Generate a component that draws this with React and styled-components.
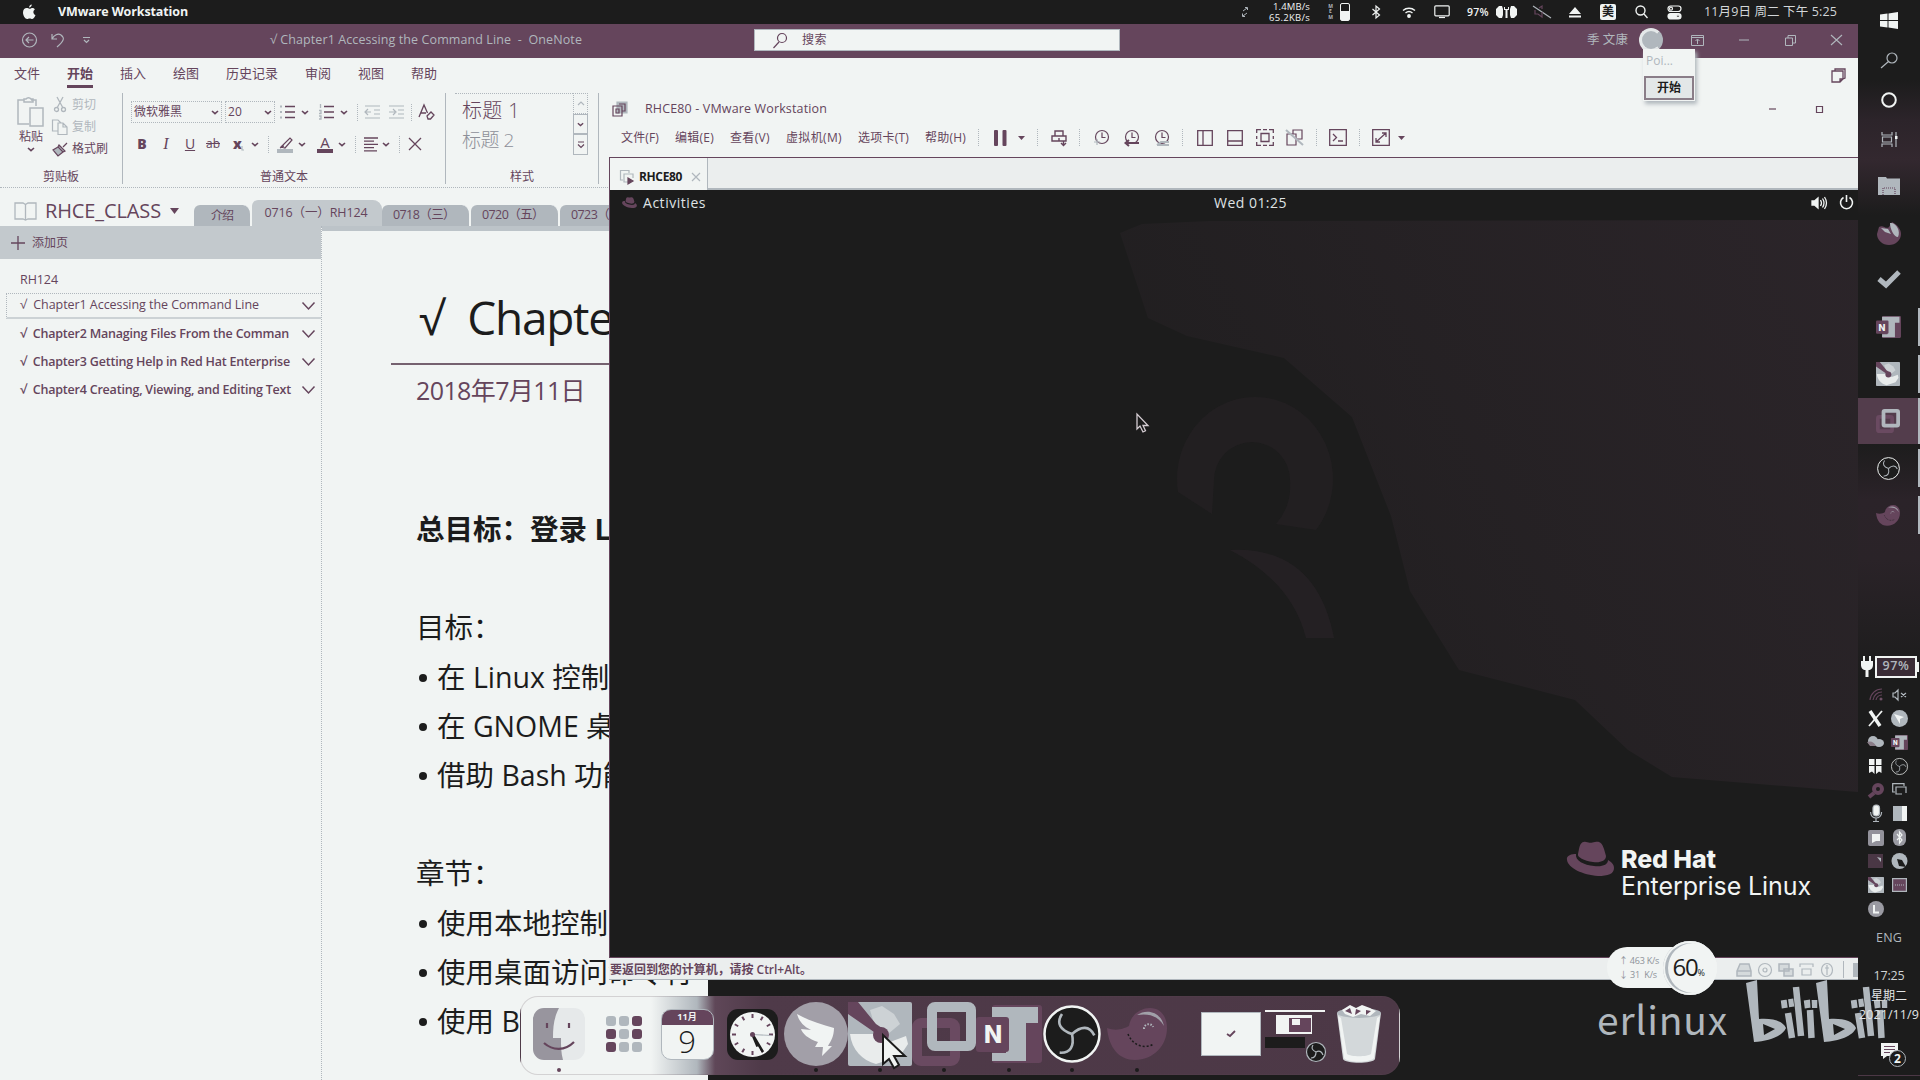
import React, { useLayoutEffect, useRef } from "react";
import styled, { createGlobalStyle, css } from "styled-components";

const C = { ink: "#1c1c1c", plum: "#65455c", grey: "#b0b7bd", paper: "#f1f4f3", band: "#c3c9cd", strip: "#ebeeee" };

const Global = createGlobalStyle`
  * { box-sizing: border-box; }
  body { margin: 0; background: ${C.ink}; overflow: hidden; }
  svg { display: block; flex: none; overflow: visible; }
`;

const Screen = styled.div`
  position: relative; width: 1920px; height: 1080px; overflow: hidden; background: ${C.ink};
  font-family: "Open Sans", "Noto Sans CJK SC", sans-serif; font-size: 12px; color: ${C.plum};
`;

/* A label whose tracking is adjusted to fill a given width. */
const LabelBox = styled.span`
  display: block; flex: none; white-space: pre; line-height: 1;
  width: ${(p) => p.$w}px; margin-left: ${(p) => p.$ml || 0}px;
  font-size: ${(p) => p.$s || 12}px; font-weight: ${(p) => p.$b || 400};
  color: ${(p) => p.$c || "inherit"};
`;
function Label({ w, ml, s, b, c, children, className }) {
  const ref = useRef(null);
  useLayoutEffect(() => {
    const el = ref.current;
    el.style.letterSpacing = "0px";
    const n = Math.max(1, el.textContent.length);
    el.style.letterSpacing = (w - el.getBoundingClientRect().width) / n + "px";
  });
  return (
    <LabelBox className={className} $w={w} $ml={ml} $s={s} $b={b} $c={c}><span ref={ref}>{children}</span></LabelBox>
  );
}

const Glyph = styled.svg`margin-left: ${(p) => p.$ml || 0}px;`;
function Icon({ w = 16, h = 16, ml, box, c = C.plum, sw = 1.2, fill = "none", children }) {
  return (
    <Glyph width={w} height={h} $ml={ml} viewBox={box || `0 0 ${w} ${h}`} fill={fill} stroke={c} strokeWidth={sw}>{children}</Glyph>
  );
}
const Chevron = ({ ml, c = C.plum, w = 8 }) => (
  <Icon w={w} h={5} ml={ml} c={c} box="0 0 8 5" sw={1.6}><path d="M1 1l3 2.6L7 1" /></Icon>
);
const Divider = styled.i`
  flex: none; width: 0; height: ${(p) => (p.$h === undefined ? 17 : p.$h)}px; margin-left: ${(p) => p.$ml}px;
  border-left: 1px ${(p) => (p.$solid ? "solid" : "dotted")} ${C.grey};
`;

/* ---------- top menu bar ---------- */
const MenuBar = styled.header`
  display: flex; align-items: center; width: 1858px; height: 24px; padding-left: 22px; background: ${C.ink}; color: ${C.paper};
`;
const Push = styled.div`flex: 1;`;
const NetSpeed = styled.div`display: flex; flex-direction: column; align-items: flex-end; gap: 1px; width: 46px; margin-left: 16px;`;
const MemText = styled.span`margin-left: 17px; width: 7px; font: 700 5px/5.5px "Open Sans", sans-serif; color: ${C.grey}; display: flex; flex-direction: column; align-items: center;`;
const MemBar = styled.span`margin-left: 6px; width: 10px; height: 18px; border: 1px solid ${C.paper}; border-radius: 2px; background: linear-gradient(${C.ink} 45%, ${C.paper} 45%);`;
const ImeBadge = styled.span`
  display: flex; align-items: center; justify-content: center; width: 16px; height: 16px; margin-left: 19px; border-radius: 2px;
  background: ${C.paper}; color: ${C.ink}; font-size: 12px; line-height: 1; font-weight: 700;
`;

function TopMenu() {
  return (
    <MenuBar>
      <Icon w={14} h={16} c="none" fill={C.paper}>
        <path d="M9.8.6c.1 1.500-1.200 3-2.700 3C7 2.200 8.300.800 9.800.600zM12.800 5.500c-2.200 1.500-1.700 4.600.700 5.600-.5 1.700-1.800 3.900-3.200 3.900-1 0-1.400-.6-2.600-.6s-1.700.6-2.600.6C3.200 15 1 11.600 1 8.500c0-3 1.900-4.400 3.600-4.400 1.200 0 2.100.7 2.900.7s1.800-.8 3.200-.8c.8 0 1.600.5 2.100 1.500z" />
      </Icon>
      <Label w={130} ml={22} s={12.500} b={700}>VMware Workstation</Label>
      <Push />
      <Icon w={6} h={12} c={C.grey} sw={1}><path d="M1 5l4-3M3 1.500h2.500V4M5 7L1 10M.5 7.500V10.500H3" /></Icon>
      <NetSpeed><Label w={37} s={9.500}>1.4MB/s</Label><Label w={41} s={9.500}>65.2KB/s</Label></NetSpeed>
      <MemText><span>M</span><span>E</span><span>M</span></MemText>
      <MemBar />
      <Icon w={10} h={14} ml={21} c={C.paper} sw={1.200}><path d="M1.500 4l7 6L5 13V1l3.500 3-7 6" /></Icon>
      <Icon w={14} h={12} ml={21} c={C.paper} sw={1.400}><path d="M1 4.500a9 9 0 0 1 12 0M3.500 7a5.500 5.500 0 0 1 7 0" /><circle cx="7" cy="10" r="1.200" fill={C.paper} /></Icon>
      <Icon w={16} h={14} ml={18} c={C.paper} sw={1.200}><rect x=".8" y=".8" width="14.400" height="10" rx="1" /><path d="M5 12.500h6" /></Icon>
      <Label w={22} ml={17} s={10.500} b={600}>97%</Label>
      <Icon w={23} h={14} ml={6} c="none" fill={C.paper}>
        <path d="M4 1h3l1 3v6l-1 3H4L1 10V4zM19 1h-3l-1 3v6l1 3h3l3-3V4z" /><path d="M9 2v3h1.500v8h2V5H14V2h-1v2h-3V2z" />
      </Icon>
      <Icon w={20} h={14} ml={14} c={C.grey}><path d="M1 1l18 12" /><path d="M3 5v4h3l4 3V7M7 3l3-2v3" stroke={C.plum} /></Icon>
      <Icon w={12} h={11} ml={17} c="none" fill={C.paper}><path d="M6 0l6 7H0zM0 8.500h12v2H0z" /></Icon>
      <ImeBadge>美</ImeBadge>
      <Icon w={13} h={14} ml={19} c={C.paper} sw={1.400}><circle cx="5.500" cy="5.500" r="4.500" /><path d="M9 9l3.500 4" /></Icon>
      <Icon w={15} h={15} ml={19} c={C.paper} sw={1.200}><rect x="1" y="1" width="13" height="5.500" rx="2.700" /><circle cx="4" cy="3.700" r="1.500" /><rect x="1" y="8.500" width="13" height="5.500" rx="2.700" fill={C.paper} /><circle cx="11" cy="11.200" r="1.400" fill={C.ink} /></Icon>
      <Label w={133} ml={22} s={12.500} c="#d2d6d8">11月9日 周二 下午 5:25</Label>
      <Divider $ml={20} $h={0} />
    </MenuBar>
  );
}

/* ---------- OneNote ---------- */
const OneNote = styled.section`width: 1858px; height: 1056px; display: flex; flex-direction: column; background: ${C.paper};`;
const TitleBar = styled.div`display: flex; align-items: center; height: 34px; flex: none; padding: 0 0 2px 22px; background: ${C.plum}; color: ${C.grey};`;
const SearchBox = styled.div`
  display: flex; align-items: center; width: 366px; height: 22px; margin-left: 172px; margin-top: 0; padding-left: 18px;
  background: ${C.paper}; border: 1px solid ${C.grey}; color: ${C.plum};
`;
const Avatar = styled.span`width: 24px; height: 24px; margin-left: 11px; border-radius: 50%; background: ${C.grey}; border: 3px solid #e4e8e9; border-right-color: ${C.grey};`;

const RibbonTabs = styled.nav`display: flex; align-items: center; gap: 27px; height: 34px; flex: none; padding: 0 12px 0 14px;`;
const RibbonTab = styled.div`
  height: 30px; padding-top: 9px; margin-top: -5px;
  border-bottom: 3px solid ${(p) => (p.$on ? C.plum : "transparent")};
`;
const Ribbon = styled.div`display: flex; height: 96px; flex: none; border-bottom: 1px dotted ${C.grey};`;
const Group = styled.div`
  display: flex; flex-direction: column; width: ${(p) => p.$w}px; height: 91px; margin-top: 1px; flex: none;
  border-right: 1px solid ${C.grey};
`;
const GroupName = styled.div`display: flex; justify-content: center; margin-top: auto; height: 13px;`;
const ToolRow = styled.div`display: flex; align-items: center; height: ${(p) => p.$h}px;`;
const Clip = styled.div`display: flex; height: 68px;`;
const PasteCol = styled.div`display: flex; flex-direction: column; align-items: center; width: 28px; margin-left: 17px; padding-top: 3px; gap: 4px;`;
const ClipCol = styled.div`display: flex; flex-direction: column; margin-left: 7px;`;
const Combo = styled.div`
  display: flex; align-items: center; justify-content: space-between; height: 22px; width: ${(p) => p.$w}px; margin-left: ${(p) => p.$ml}px;
  padding: 0 2px; border: 1px dotted ${C.grey};
`;
const Mark = styled.span`
  flex: none; width: ${(p) => p.$w}px; margin-left: ${(p) => p.$ml}px; text-align: center; font-size: 14px; line-height: 16px;
  ${(p) => p.$kind === "B" && css`font-weight: 800;`}
  ${(p) => p.$kind === "I" && css`font-style: italic; font-family: "Liberation Serif", serif; font-size: 16px;`}
  ${(p) => p.$kind === "U" && css`text-decoration: underline;`}
  ${(p) => p.$kind === "S" && css`text-decoration: line-through; font-size: 12px;`}
  ${(p) => p.$kind === "bar" && css`border-bottom: 4px solid ${C.plum}; line-height: 14px; font-size: 15px;`}
`;
const StyleBody = styled.div`display: flex; height: 65px; padding-left: 9px;`;
const StyleList = styled.div`display: flex; flex-direction: column; width: 118px; padding: 7px 0 0 7px; gap: 10px; border-top: 1px dotted ${C.grey};`;
const StyleScroll = styled.div`display: flex; flex-direction: column; width: 15px; height: 62px;`;
const ScrollCell = styled.div`
  display: flex; align-items: center; justify-content: center; flex: 1; border: 1px ${(p) => (p.$dim ? "dotted" : "solid")} ${C.grey};
`;

const NotebookRow = styled.div`display: flex; align-items: flex-end; height: 38px; flex: none; padding-left: 14px;`;
const NotebookName = styled.div`display: flex; align-items: center; height: 30px; width: 180px;`;
const SectionTab = styled.div`
  display: flex; align-items: center; justify-content: ${(p) => (p.$on ? "center" : "flex-start")}; flex: none;
  width: ${(p) => p.$w}px; height: ${(p) => (p.$on ? 26 : 21)}px; padding-left: ${(p) => p.$pl || 0}px;
  border-radius: 6px 9px 0 0; background: ${(p) => (p.$on ? C.band : C.grey)};
  border-right: 2px solid ${(p) => (p.$on ? C.band : C.paper)};
`;
const Body = styled.div`display: flex; flex: 1; min-height: 0;`;
const Sidebar = styled.aside`width: 322px; border-right: 1px dotted ${C.grey};`;
const AddPage = styled.div`display: flex; align-items: center; height: 33px; padding-left: 11px; background: ${C.band};`;
const SectionTitle = styled.div`display: flex; align-items: center; height: 34px; padding: 9px 0 0 20px;`;
const PageItem = styled.div`
  display: flex; align-items: center; justify-content: space-between; height: 28px; padding: 0 6px 0 20px;
  ${(p) => p.$on && css`height: 26px; margin: 0 0 1px 6px; padding-left: 13px; border: 1px dotted ${C.grey}; border-right: 0; border-bottom: 2px solid #ccd2d5;`}
`;
const Page = styled.main`flex: 1; overflow: hidden; border-top: 5px solid #bcc3c8; color: ${C.ink};`;
const PageTitle = styled.div`display: flex; align-items: center; gap: 23px; height: 66px; margin: 53px 0 0 97px; font-size: 46px; font-family: "Open Sans", sans-serif;`;
const Rule = styled.div`height: 2px; width: 400px; margin: 13px 0 0 69px; background: #75616f;`;
const PageDate = styled.div`height: 30px; margin: 10px 0 100px 94px; display: flex; align-items: center; color: ${C.plum};`;
const Line = styled.div`
  height: 49.200px; line-height: 49.200px; padding-left: 94px; white-space: pre; font-size: 28.500px; font-weight: ${(p) => (p.$b ? 700 : 400)};
  display: flex; align-items: center;
`;
const Dot = styled.i`width: 8px; height: 8px; border-radius: 50%; background: ${C.ink}; margin: 1px 10px 0 3px;`;

const tabs = [["文件", 26], ["开始", 26], ["插入", 26], ["绘图", 26], ["历史记录", 52], ["审阅", 26], ["视图", 26], ["帮助", 26]];
const lines = [
  ["总目标：登录 Linux", 0, 1], [""], ["目标："], ["在 Linux 控制台", 1], ["在 GNOME 桌面", 1], ["借助 Bash 功能", 1], [""],
  ["章节："], ["使用本地控制台", 1], ["使用桌面访问命令行", 1], ["使用 B", 1],
];
const pages = [
  ["√  Chapter1 Accessing the Command Line", 239], ["√  Chapter2 Managing Files From the Comman", 269],
  ["√  Chapter3 Getting Help in Red Hat Enterprise", 270], ["√  Chapter4 Creating, Viewing, and Editing Text", 271],
];

function ListGlyph({ ml, numbered }) {
  return (
    <Icon w={15} h={16} ml={ml} sw={1.300}>
      <path d="M5 2.500h10M5 8h10M5 13.500h10" />
      {numbered ? <path d="M1.500 0v4M0 6.500h2v3H0M0 12h2v3H0" stroke={C.grey} /> : <path d="M0 2.500h2M0 8h2M0 13.500h2" strokeWidth="2" stroke={C.grey} />}
    </Icon>
  );
}
function IndentGlyph({ ml, flip }) {
  return (
    <Icon w={15} h={14} ml={ml} c={C.grey} sw={1.200}>
      <path d={`M0 1h15M9 5h6M9 9h6M0 13h15M0 7h6M${flip ? "4 4l3 3-3 3" : "3 4L0 7l3 3"}`} />
    </Icon>
  );
}

function OneNoteWindow() {
  return (
    <OneNote>
      <TitleBar>
        <Icon w={15} h={16} c={C.grey}><circle cx="7.500" cy="8" r="7" /><path d="M11.500 8H4M7 5L4 8l3 3" /></Icon>
        <Icon w={14} h={16} ml={14} c={C.grey}><path d="M1 2v5h5M1 7c2-4 6-6 9-4 4 3 3 6-4 12" /></Icon>
        <Icon w={7} h={6} ml={18} c={C.grey}><path d="M0 .5h7M1 3l2.500 2.500L6 3" /></Icon>
        <Label w={312} ml={180} s={12.500}>{"√ Chapter1 Accessing the Command Line  -  OneNote"}</Label>
        <SearchBox>
          <Icon w={14} h={15}><circle cx="9" cy="5" r="4.500" /><path d="M6 9l-5.500 6" /></Icon>
          <Label w={25} ml={15} s={12}>搜索</Label>
        </SearchBox>
        <Label w={41} ml={467} s={12.500}>季 文康</Label>
        <Avatar />
        <Icon w={13} h={11} ml={28} c={C.grey} sw={1}><path d="M.5.500h12v10H.5zM.5 2.500h12M6.500 9V4.500M4.500 6l2-2 2 2" /></Icon>
        <Icon w={10} h={2} ml={35} c={C.grey} sw={1}><path d="M0 1h10" /></Icon>
        <Icon w={11} h={11} ml={36} c={C.grey} sw={1}><path d="M.5 3h7v7.500h-7zM3 3V.500h7.500V8H8" /></Icon>
        <Icon w={11} h={10} ml={35} c={C.grey} sw={1.100}><path d="M0 0l11 10M11 0L0 10" /></Icon>
      </TitleBar>
      <RibbonTabs>
        {tabs.map(([t, w], i) => <RibbonTab key={t} $on={i === 1}><Label w={w} s={13} b={i === 1 ? 700 : 400}>{t}</Label></RibbonTab>)}
        <Push />
        <Icon w={15} h={15} sw={1.300}><path d="M4 3V1h10v9l-2 1M1 3h11v8l-3 3H1zM9 14v-3h3" /></Icon>
      </RibbonTabs>
      <Ribbon>
        <Group $w={123}>
          <Clip>
            <PasteCol>
              <Icon w={28} h={31} c={C.grey} sw={1.500}><path d="M7 4H1v24h11M19 10V4h-5M7 6h9V3h-2a3 3 0 0 0-5 0H7zM13 12h13v18H13z" /></Icon>
              <Label w={24} s={12} c={C.plum}>粘贴</Label>
              <Chevron />
            </PasteCol>
            <ClipCol>
              <ToolRow $h={23}><Icon w={16} h={15} c={C.grey} sw={1.300}><path d="M5 0l6 11M11 0L5 11" /><circle cx="4.500" cy="12.500" r="2" /><circle cx="11.500" cy="12.500" r="2" /></Icon><Label w={24} ml={4} s={12} c={C.grey}>剪切</Label></ToolRow>
              <ToolRow $h={22}><Icon w={16} h={16} c={C.grey} sw={1.200}><path d="M6 12H.5V1H6l3 3M6 4h5l4 4v7.500H6zM11 4v4h4" /></Icon><Label w={24} ml={4} s={12} c={C.grey}>复制</Label></ToolRow>
              <ToolRow $h={22}><Icon w={16} h={15} sw={1.200}><path d="M15 1l-4 4M7 3l6 6-2 1-5-5zM6 5L1 8l5 6 5-4" fill={C.grey} /></Icon><Label w={36} ml={4} s={12}>格式刷</Label></ToolRow>
            </ClipCol>
          </Clip>
          <GroupName><Label w={36} s={12}>剪贴板</Label></GroupName>
        </Group>
        <Group $w={323}>
          <ToolRow $h={38}>
            <Combo $w={91} $ml={8}><Label w={48} s={12}>微软雅黑</Label><Chevron /></Combo>
            <Combo $w={50} $ml={3}><Label w={14} s={12}>20</Label><Chevron /></Combo>
            <ListGlyph ml={5} /><Chevron ml={6} />
            <ListGlyph ml={10} numbered /><Chevron ml={6} />
            <Divider $ml={9} />
            <IndentGlyph ml={7} /><IndentGlyph ml={9} flip />
            <Divider $ml={7} />
            <Icon w={16} h={16} ml={7} sw={1.300}><path d="M0 13L5 1l3.500 8M2 9h5M8 12l4-4 3 3-3.500 4H9z" /></Icon>
          </ToolRow>
          <ToolRow $h={26}>
            <Mark $w={10} $ml={14} $kind="B">B</Mark>
            <Mark $w={10} $ml={14} $kind="I">I</Mark>
            <Mark $w={12} $ml={13} $kind="U">U</Mark>
            <Mark $w={16} $ml={9} $kind="S">ab</Mark>
            <Mark $w={8} $ml={12} $kind="B">x</Mark>
            <Icon w={3} h={6} ml={0} c={C.grey}><path d="M1 5v4h2" /></Icon>
            <Chevron ml={7} />
            <Divider $ml={9} />
            <Icon w={18} h={17} ml={8}><path d="M4 11l9-9 2 2-7 8zM3 12l4-2" /><path d="M0 15h16" stroke={C.grey} strokeWidth="4" /></Icon>
            <Chevron ml={3} />
            <Mark $w={16} $ml={11} $kind="bar">A</Mark>
            <Chevron ml={5} />
            <Divider $ml={9} />
            <Icon w={14} h={15} ml={8} sw={1.300}><path d="M0 1h14M0 4.200h10M0 7.400h14M0 10.600h10M0 13.800h13" /></Icon>
            <Chevron ml={4} />
            <Divider $ml={9} />
            <Icon w={12} h={12} ml={9} sw={1.300}><path d="M0 0l12 12M12 0L0 12" /></Icon>
          </ToolRow>
          <GroupName><Label w={48} s={12}>普通文本</Label></GroupName>
        </Group>
        <Group $w={153}>
          <StyleBody>
            <StyleList><Label w={58} s={20} b={300}>标题 1</Label><Label w={52} s={19} b={300} c="#8d8f98">标题 2</Label></StyleList>
            <StyleScroll>
              <ScrollCell $dim><Icon w={6} h={3} c={C.grey}><path d="M0 3l3-3 3 3" /></Icon></ScrollCell>
              <ScrollCell><Chevron w={7} /></ScrollCell>
              <ScrollCell><Icon w={6} h={7}><path d="M0 1h6M0 3.500L3 6.500l3-3" /></Icon></ScrollCell>
            </StyleScroll>
          </StyleBody>
          <GroupName><Label w={24} s={12}>样式</Label></GroupName>
        </Group>
      </Ribbon>
      <NotebookRow>
        <NotebookName>
          <Icon w={23} h={18} c={C.grey} sw={1.300}><path d="M1 1h8l2.500 1.500L14 1h8v16h-8l-2.500 1L9 17H1zM11.500 2v16" /></Icon>
          <Label w={116} ml={8} s={20}>RHCE_CLASS</Label>
          <Icon w={9} h={6} ml={9} c="none" fill={C.plum}><path d="M0 0h9L4.500 6z" /></Icon>
        </NotebookName>
        <SectionTab $w={58} $pl={17}><Label w={22} s={12}>介绍</Label></SectionTab>
        <SectionTab $w={130} $on><Label w={103} s={12.500}>{"0716（一）RH124"}</Label></SectionTab>
        <SectionTab $w={89} $pl={11}><Label w={62} s={12.500}>{"0718（三）"}</Label></SectionTab>
        <SectionTab $w={89} $pl={11}><Label w={62} s={12.500}>{"0720（五）"}</Label></SectionTab>
        <SectionTab $w={89} $pl={11}><Label w={62} s={12.500}>{"0723（一）"}</Label></SectionTab>
      </NotebookRow>
      <Body>
        <Sidebar>
          <AddPage><Icon w={14} h={14} sw={1.300}><path d="M7 0v14M0 7h14" /></Icon><Label w={36} ml={7} s={12}>添加页</Label></AddPage>
          <SectionTitle><Label w={38} s={12.500}>RH124</Label></SectionTitle>
          {pages.map(([t, w], i) => (
            <PageItem key={t} $on={i === 0}>
              <Label w={w} s={12.500} b={i ? 600 : 400}>{t}</Label>
              <Icon w={13} h={8} sw={1.500}><path d="M.5.500L6.500 7l6-6.500" /></Icon>
            </PageItem>
          ))}
        </Sidebar>
        <Page>
          <PageTitle><span>√</span><Label w={188} s={46}>Chapter1</Label></PageTitle>
          <Rule />
          <PageDate><Label w={169} s={25}>2018年7月11日</Label></PageDate>
          {lines.map(([t, dot, b], i) => <Line key={i} $b={b}>{dot ? <Dot /> : null}{t}</Line>)}
        </Page>
      </Body>
    </OneNote>
  );
}

/* ---------- desktop below the windows ---------- */
const Backdrop = styled.div`position: absolute; left: 708px; top: 980px; width: 1150px; height: 100px; background: ${C.ink};`;

/* ---------- VMware ---------- */
const VmWindow = styled.section`
  position: absolute; left: 609px; top: 96px; width: 1249px; height: 884px; display: flex; flex-direction: column; background: ${C.paper};
`;
const VmTitle = styled.div`display: flex; align-items: center; height: 26px; padding-left: 3px;`;
const VmMenu = styled.div`display: flex; align-items: center; height: 35px; padding: 0 0 4px 12px; margin-top: 0;`;
const VmTabs = styled.div`display: flex; height: 33px; flex: none; background: ${C.strip}; border-top: 1px solid ${C.plum}; border-left: 1px solid ${C.plum};`;
const VmTab = styled.div`display: flex; align-items: center; width: 98px; padding: 6px 0 0 10px; background: ${C.paper}; border-right: 1px solid ${C.grey};`;
const VmTabFill = styled.div`flex: 1; border-bottom: 2px solid ${C.grey};`;
const Guest = styled.div`
  display: flex; flex-direction: column; position: relative; flex: 1; min-height: 0; border-left: 1px solid ${C.plum}; border-bottom: 1px solid ${C.plum}; background: ${C.ink}; color: #dfe2e4;
`;
const GnomeBar = styled.div`display: flex; align-items: center; height: 28px; padding: 0 4px 3px 12px; position: relative;`;
const Wallpaper = styled.svg`position: absolute; left: 0; top: 0;`;
const Pointer = styled.svg`position: absolute; left: ${(p) => p.$x}px; top: ${(p) => p.$y}px;`;
const Brand = styled.div`position: relative; display: flex; align-items: flex-start; margin: auto 47px 58px auto; font-family: Inter, sans-serif; color: ${C.paper};`;
const BrandHat = styled.div`margin-top: -6px;`;
const BrandText = styled.div`display: flex; flex-direction: column; gap: 2px; margin-left: 7px;`;
const StatusBar = styled.div`display: flex; align-items: center; height: 22px; flex: none; padding: 2px 0 0 1px; background: ${C.strip}; border-bottom: 1px solid ${C.grey};`;
const EdgeBlock = styled.i`width: 5px; height: 14px; margin-left: 9px; background: ${C.grey};`;

function Hat({ w, h }) {
  return (
    <Icon w={w} h={h} box="0 0 47 35" c="none" fill={C.plum}>
      <path d="M12 8C13 3 15 0 19 1c4 1 5 1 9 0 5-1 7 1 9 7l2 7c0 5-6 7-13 6-9-1-16-5-15-8z" />
      <path d="M9 13c-4 0-10 1-9 6 1 8 16 15 31 16 10 0 16-2 16-8 0-4-3-6-6-8 0 5-6 7-14 6-10-1-19-5-18-12z" />
    </Icon>
  );
}
const vmMenus = [["文件(F)", 38, 0], ["编辑(E)", 39, 16], ["查看(V)", 40, 16], ["虚拟机(M)", 56, 16], ["选项卡(T)", 51, 16], ["帮助(H)", 41, 16]];

function Clock({ ml, kind }) {
  return (
    <Icon w={15} h={17} ml={ml} sw={1.200}>
      <circle cx="8" cy="8" r="6.500" /><path d="M8 3.500V8.500h3.500" />
      {kind === 0 && <path d="M0 13h6M3 10v6" stroke={C.grey} />}
      {kind === 1 && <path d="M15 14H2M5 11l-3.500 3L5 17" strokeWidth="2" />}
      {kind === 2 && <path d="M3 16l4-3h8M3 16h12" stroke={C.grey} strokeWidth="2" />}
    </Icon>
  );
}

function Vmware() {
  return (
    <VmWindow>
      <VmTitle>
        <Icon w={16} h={17} sw={1.200}><path d="M5 1h10v11H5z" fill={C.grey} stroke={C.grey} /><path d="M1 5h9v10H1zM4 8h3v4H4zM7 3h6v7h-3" /></Icon>
        <Label w={182} ml={17} s={12.500}>RHCE80 - VMware Workstation</Label>
        <Push />
        <Icon w={7} h={2} c={C.plum}><path d="M0 1h7" /></Icon>
        <Icon w={7} h={7} ml={40}><path d="M.5.500h6v6h-6z" /></Icon>
        <Divider $ml={34} $h={0} />
      </VmTitle>
      <VmMenu>
        {vmMenus.map(([t, w, ml]) => <Label key={t} w={w} ml={ml} s={12}>{t}</Label>)}
        <Divider $ml={12} />
        <Icon w={13} h={16} ml={15} c="none" fill={C.plum}><rect width="4" height="16" rx="1" /><rect x="8.500" width="4" height="16" rx="1" /></Icon>
        <Icon w={7} h={4} ml={11} c="none" fill={C.plum}><path d="M0 0h7L3.500 4z" /></Icon>
        <Divider $ml={12} />
        <Icon w={16} h={16} ml={13} sw={1.400}><path d="M4 6V1h8v5M1 6h14v5H1zM8 8v3M12.500 11v5M10 13l2.500 2.500L15 13" /></Icon>
        <Divider $ml={12} />
        <Clock ml={14} kind={0} /><Clock ml={15} kind={1} /><Clock ml={15} kind={2} />
        <Divider $ml={13} />
        <Icon w={16} h={16} ml={14} sw={1.300}><path d="M.7.700h14.600v14.600H.7zM6 1v14" /></Icon>
        <Icon w={16} h={16} ml={14} sw={1.300}><path d="M.7.700h14.600v14.600H.7zM1 11h14" /></Icon>
        <Icon w={18} h={17} ml={13} sw={1.300}><path d="M.7 4V.700H5M7 .7h4M7 16.300h4M.7 7v3M17.300 7v3M13 .7h4.300V4M17.300 13v3.300H13M5 16.300H.7V13" /><path d="M5 4.500h8v8H5z" /></Icon>
        <Icon w={17} h={17} ml={12} sw={1.200}><path d="M1 5h9v11H1zM7 5V1h9v9h-6" /><path d="M0 1l17 15" stroke={C.grey} strokeWidth="2" /></Icon>
        <Divider $ml={13} />
        <Icon w={18} h={17} ml={12} sw={1.300}><path d="M.7.700h16.600v15.600H.7zM4 5l3.500 3.500L4 12M9 12h5" /></Icon>
        <Divider $ml={12} />
        <Icon w={18} h={17} ml={12} sw={1.300}><path d="M.7.700h16.600v15.600H.7zM10 4h4v4M14 4L4 13M4 9v4h4" /></Icon>
        <Icon w={7} h={4} ml={8} c="none" fill={C.plum}><path d="M0 0h7L3.500 4z" /></Icon>
      </VmMenu>
      <VmTabs>
        <VmTab>
          <Icon w={14} h={15}><path d="M9 12H4V4h9v4M3 10H.5V.500H9V3" stroke={C.grey} /><path d="M8 8l5 3-5 3z" fill={C.plum} /></Icon>
          <Label w={43} ml={5} s={12} b={700} c={C.ink}>RHCE80</Label>
          <Icon w={8} h={8} ml={10} c={C.grey}><path d="M0 0l8 8M8 0L0 8" /></Icon>
        </VmTab>
        <VmTabFill />
      </VmTabs>
      <Guest>
        <Wallpaper width="1248" height="768" viewBox="610 190 1248 768">
          <defs>
            <linearGradient id="glow" x1="0" y1="0.600" x2="1" y2="0.200"><stop offset="0" stopColor={C.plum} stopOpacity=".05" /><stop offset=".4" stopColor={C.plum} stopOpacity=".11" /><stop offset="1" stopColor={C.plum} stopOpacity=".2" /></linearGradient>
          </defs>
          <path d="M1120 233L1142 224 1210 221 1858 220V792L1672 777 1628 750 1575 700 1459 670 1410 591 1391 516 1352 417 1284 358 1187 336 1148 318z" fill="url(#glow)" />
          <path d="M1178 492A78 82 0 1 1 1316 530L1276 524Q1292 506 1290 480A38 38 0 0 0 1214 480L1212 514z" fill={C.plum} opacity=".09" />
          <path d="M1230 550q86-4 104 88h-28q-14-56-76-88z" fill={C.plum} opacity=".12" />
        </Wallpaper>
        <GnomeBar>
          <Hat w={15} h={11} />
          <Label w={63} ml={6} s={14}>Activities</Label>
          <Label w={73} ml={508} s={14}>Wed 01:25</Label>
          <Push />
          <Icon w={16} h={14} c={C.paper} sw={1.300}><path d="M1 5h2.500L7 2v10L3.500 9H1z" fill={C.paper} /><path d="M9.500 4q2 3 0 6M11.500 2.500q3 4.500 0 9M13.500 1q4 6 0 12" /></Icon>
          <Icon w={15} h={15} ml={12} c={C.paper} sw={1.600}><path d="M4.500 2.500a6 6 0 1 0 6 0M7.500 0v7" /></Icon>
        </GnomeBar>
        <Pointer $x={526} $y={223} width="13" height="20" viewBox="0 0 13 20" fill={C.ink} stroke="#d5cdd3" strokeWidth="1.300"><path d="M1 1v15l3-3 3 6 2.500-1.200L7 12.500h5z" /></Pointer>
        <Brand>
          <BrandHat><Hat w={47} h={35} /></BrandHat>
          <BrandText>
            <Label w={95} s={25} b={800}>Red Hat</Label>
            <Label w={190} s={25}>Enterprise Linux</Label>
          </BrandText>
        </Brand>
      </Guest>
      <StatusBar>
        <Label w={202} s={12} b={600}>要返回到您的计算机，请按 Ctrl+Alt。</Label>
        <Push />
        <Icon w={16} h={14} c={C.grey} sw={1.500}><path d="M1 8l3-7h9l2 7v5H1zM1 8h14" fill="#d5dadc" /></Icon>
        <Icon w={14} h={14} ml={6} c={C.grey}><circle cx="7" cy="7" r="6.500" /><circle cx="7" cy="7" r="2" /></Icon>
        <Icon w={16} h={14} ml={6} c={C.grey} sw={1.500}><path d="M1 1h10v7H1zM6 6h9v7H6z" fill="#d5dadc" /></Icon>
        <Icon w={13} h={12} ml={6} c={C.grey}><path d="M0 3V0h13v3M2 5h9v6H2z" /></Icon>
        <Icon w={12} h={14} ml={8} c={C.grey}><ellipse cx="6" cy="7" rx="5.500" ry="6.500" /><path d="M6 2v10M4 5h4" /></Icon>
        <Divider $ml={10} $solid />
        <EdgeBlock />
      </StatusBar>
    </VmWindow>
  );
}

/* ---------- small popup ---------- */
const Popup = styled.div`
  position: absolute; left: 1643px; top: 49px; width: 52px; height: 52px; display: flex; flex-direction: column; justify-content: space-between;
  padding: 6px 1px 1px; background: ${C.paper}; box-shadow: 2px 3px 4px ${C.grey};
`;
const PopupButton = styled.button`
  display: flex; align-items: center; justify-content: center; width: 50px; height: 24px; padding: 0; border: 2px solid #8a7d88; background: #e3e7e8;
  font-family: inherit; color: ${C.ink};
`;

/* ---------- dock ---------- */
const Dock = styled.div`
  position: absolute; left: 520px; top: 996px; width: 880px; height: 79px; padding: 0 0 3px 12px; border-radius: 18px; display: flex; align-items: center;
  background: linear-gradient(90deg, ${C.paper} 0, ${C.paper} 130px, ${C.grey} 176px, #5f4758 194px, #4f3a49 240px, #4c3846 100%); border: 1px solid #5d4a5733;
`;
const DockItem = styled.div`
  position: relative; flex: none; display: flex; align-items: center; justify-content: center; width: ${(p) => p.$w}px; height: 66px; margin-left: ${(p) => p.$ml || 0}px;
  &::after { content: ""; display: ${(p) => (p.$run ? "block" : "none")}; position: absolute; left: 50%; bottom: -5px; width: 4px; height: 4px; margin-left: -2px; border-radius: 50%; background: ${(p) => (p.$lite ? C.plum : C.ink)}; }
`;
const PadGrid = styled.div`display: grid; grid-template-columns: repeat(3, 10px); grid-auto-rows: 10px; gap: 3px;`;
const PadTile = styled.i`border-radius: 3px; background: ${(p) => (p.$d ? C.plum : C.grey)};`;
const Calendar = styled.div`width: 53px; height: 51px; border-radius: 10px; background: linear-gradient(${C.plum} 15px, ${C.paper} 15px); border: 1px solid ${C.grey}; text-align: center; color: ${C.ink};`;
const CalHead = styled.div`height: 14px; color: ${C.paper}; font-size: 9px; font-weight: 700; line-height: 14px;`;
const CalDay = styled.div`font: 300 31px/35px "Open Sans", sans-serif;`;
const Thumb = styled.div`width: 60px; height: 44px; display: flex; align-items: center; justify-content: center; background: ${C.paper}; border: 1px solid ${C.grey};`;

function Obs({ r }) {
  return (
    <Icon w={r * 2} h={r * 2} box="0 0 58 58" c={C.paper} sw={2.500}>
      <circle cx="29" cy="29" r="27.500" fill={C.ink} />
      <g stroke={C.grey} strokeWidth="2.600">
        {[0, 120, 240].map((a) => <path key={a} d="M29 29C17 25 13 18 19 9" transform={`rotate(${a} 29 29)`} />)}
      </g>
    </Icon>
  );
}
function Snail({ w }) {
  return (
    <Icon w={w} h={(w * 52) / 60} box="0 0 60 52" c="none" fill={C.plum}>
      <path d="M0 20c10 4 18 0 22-2C24 6 34 0 43 0c11 0 17 9 17 20 0 18-14 32-32 32C12 52 2 40 0 20z" />
      <path d="M21 26c4 10 14 16 26 10" stroke={C.ink} strokeWidth="1.500" fill="none" strokeDasharray="2 2" /><path d="M30 7C40 0 54 4 57 18 51 8 42 5 30 7z" fill={C.grey} opacity=".8" /><path d="M37 21c0-6 8-6 9-2" stroke={C.grey} strokeWidth="2" strokeDasharray="1.500 1.500" fill="none" />
    </Icon>
  );
}
function Photo({ s }) {
  return (
    <Icon w={s} h={s} box="0 0 64 64" c="none" fill={C.grey}>
      <rect width="64" height="64" rx="2" /><path d="M22 8l12-4 12 8 6 10-12 10-12-4z" fill="#cdd2d5" /><path d="M2 32l26 0 14 8 16-6 2 8-8 12-24 8C14 58 4 48 2 32z" fill="#e9ecec" /><path d="M0 0h10l18 22 6 4-8 4L0 12z" fill={C.plum} /><circle cx="33" cy="33" r="8" fill={C.plum} />
    </Icon>
  );
}
function VmIcon({ w }) {
  return (
    <Icon w={w} h={w} box="0 0 64 64" sw={10}>
      <rect x="5" y="21" width="38" height="38" rx="4" stroke="#6a4a61" /><rect x="20" y="5" width="39" height="39" rx="3" stroke={C.grey} />
    </Icon>
  );
}
const NLetter = styled.span`position: absolute; left: ${(p) => p.$x}px; top: ${(p) => p.$y}px; color: ${C.paper}; font: 800 ${(p) => p.$s}px/1 Inter, sans-serif;`;
const NoteBox = styled.span`position: relative; display: block; width: ${(p) => p.$w}px;`;
function NoteIcon({ w }) {
  return (
    <NoteBox $w={w}>
      <Icon w={w} h={(w * 58) / 66} box="0 0 66 58" c="none" fill={C.plum}>
        <rect x="16" y="0" width="50" height="58" rx="3" /><path d="M16 2h46v16H50v29V56H16v-8h14V18H16z" fill={C.grey} /><rect x="0" y="12" width="33" height="35" rx="3" />
      </Icon>
      <NLetter $x={w * 0.12} $y={w * 0.28} $s={w * 0.36}>N</NLetter>
    </NoteBox>
  );
}

function DockBar() {
  return (
    <Dock>
      <DockItem $w={52} $run $lite>
        <Icon w={52} h={52} c="none" fill={C.grey}>
          <rect width="52" height="52" rx="11" fill="#e6e9ea" /><path d="M11 0h15c-5 10-6 18-6 30h8c0 8 0 15 2 22H11A11 11 0 0 1 0 41V11A11 11 0 0 1 11 0z" fill="#98959e" />
          <path d="M14 15v5M36 15v5M11 35c9 8 21 8 30-1" fill="none" stroke={C.plum} strokeWidth="2.200" />
        </Icon>
      </DockItem>
      <DockItem $w={36} $ml={21}><PadGrid>{[0, 0, 1, 1, 0, 1, 1, 0, 0].map((d, i) => <PadTile key={i} $d={d} />)}</PadGrid></DockItem>
      <DockItem $w={54} $ml={18}><Calendar><CalHead>11月</CalHead><CalDay>9</CalDay></Calendar></DockItem>
      <DockItem $w={51} $ml={13}>
        <Icon w={51} h={51} c={C.ink}>
          <rect width="51" height="51" rx="11" fill={C.ink} stroke="none" /><circle cx="25.500" cy="25.500" r="22.500" fill={C.paper} stroke="none" />
          {[...Array(12)].map((_, i) => <path key={i} d="M25.500 5v4" strokeWidth="2" stroke={C.plum} transform={`rotate(${i * 30} 25.500 25.500)`} />)}
          <path d="M25.500 25.500L36 43M25.500 25.500l5 12" strokeWidth="2.500" /><path d="M25.500 25.500l19 1" stroke={C.grey} /><circle cx="25.500" cy="25.500" r="2.500" fill={C.plum} stroke="none" />
        </Icon>
      </DockItem>
      <DockItem $w={64} $ml={6} $run>
        <Icon w={64} h={64} c="none"><circle cx="32" cy="32" r="32" fill="#a29fa8" /><path d="M13 12c12 7 24 10 37 14 0 8-3 13-6 18h4L38 54l1-9H31l3-5c-10-3-16-9-17-13l10 1c-8-4-12-9-14-16z" fill={C.paper} /></Icon>
      </DockItem>
      <DockItem $w={64} $run><Photo s={64} /></DockItem>
      <DockItem $w={64} $run><VmIcon w={64} /></DockItem>
      <DockItem $w={66} $run><NoteIcon w={66} /></DockItem>
      <DockItem $w={58} $ml={1} $run><Obs r={29} /></DockItem>
      <DockItem $w={60} $ml={6} $run><Snail w={60} /></DockItem>
      <DockItem $w={60} $ml={34}><Thumb><Icon w={8} h={6} sw={1.800}><path d="M0 3l3 2 5-5" /></Icon></Thumb></DockItem>
      <DockItem $w={62} $ml={4}>
        <Icon w={62} h={54} c="none" fill={C.ink}>
          <rect y="3" width="60" height="2" fill={C.paper} /><rect x="11" y="8" width="36" height="19" fill={C.paper} /><rect x="24" y="11" width="22" height="14" fill={C.plum} /><rect x="27" y="12" width="8" height="6" fill={C.paper} /><rect y="30" width="40" height="11" />
          <circle cx="51" cy="45" r="9.500" stroke={C.grey} /><path d="M51 45c-4-2-5-4-3-7M51 45c4-2 6 0 7 3M51 45c0 4-2 6-5 6" fill="none" stroke={C.grey} />
        </Icon>
      </DockItem>
      <DockItem $w={46} $ml={9}>
        <Icon w={46} h={60} c="none">
          <path d="M1 9h44l-6 46c-2 5-30 5-32 0z" fill="#d3d8da" /><path d="M2 12l6 42c4 5 26 5 30 0l6-42-3 2-6 36c-4 3-20 3-24 0L5 14z" fill={C.paper} />
          <ellipse cx="23" cy="9" rx="22" ry="5" fill={C.grey} /><path d="M6 6l8-5 6 3 6-3 8 3 6 3-6 5-9-2-8 3-8-3z" fill={C.paper} /><path d="M9 7l5-3 2 6zM20 5l5 2-6 4zM30 6l5 1-5 4z" fill={C.plum} />
        </Icon>
      </DockItem>
    </Dock>
  );
}

/* ---------- side taskbar ---------- */
const TaskbarBack = styled.div`
  position: absolute; left: 1858px; top: 0; width: 62px; height: 1080px;
  background: linear-gradient(${C.ink} 80px, #2c242a 120px, #33282f 160px, ${C.ink} 215px, ${C.ink} 440px, #2b2329 500px, #2a2328 560px, ${C.ink} 680px);
`;
const Taskbar = styled.aside`
  position: absolute; left: 1858px; top: 0; width: 62px; height: 1080px; display: flex; flex-direction: column; align-items: center;
  color: ${C.grey};
`;
const TaskItem = styled.div`
  display: flex; align-items: center; justify-content: center; width: 62px; height: ${(p) => p.$h}px; flex: none;
  border-right: ${(p) => (p.$run ? 2 : 0)}px solid ${C.grey}; margin-bottom: ${(p) => p.$mb || 0}px;
  background: ${(p) => (p.$on ? "#533d4c" : "transparent")};
`;
const PowerRow = styled.div`display: flex; align-items: center; align-self: stretch; padding-left: 3px; margin-top: 121px; height: 23px;`;
const BatteryBox = styled.div`display: flex; align-items: center; justify-content: center; width: 42px; height: 22px; margin-left: 2px; border: 2px solid ${C.paper}; background: #3a2c36; color: ${C.grey};`;
const Tray = styled.div`display: grid; grid-template-columns: 17px 17px; column-gap: 7px; grid-auto-rows: 23.800px; align-items: center; justify-items: center; align-self: flex-start; margin: 5px 0 0 9px;`;
const TimeStack = styled.div`display: flex; flex-direction: column; align-items: center; gap: 7px; margin-top: ${(p) => p.$mt}px;`;
const Notice = styled.div`position: relative; width: 26px; height: 28px; margin: 22px 0 0 10px;`;
const Badge = styled.span`
  position: absolute; left: 8px; top: 7px; width: 17px; height: 17px; border-radius: 50%; border: 1px solid ${C.grey}; background: ${C.ink};
  color: ${C.paper}; font-size: 12px; line-height: 15px; text-align: center; font-weight: 700;
`;
const BottomEdge = styled.div`align-self: stretch; height: 1px; margin-top: auto; margin-bottom: 4px; background: #4c3846;`;

function TrayIcons() {
  const g = C.grey, w = C.paper;
  return (
    <Tray>
      <Icon w={14} h={13}><path d="M1 12A12 12 0 0 1 13 1M4 12a9 9 0 0 1 9-8M7 12a6 6 0 0 1 6-5" /><circle cx="12" cy="11" r="1" fill={w} /></Icon>
      <Icon w={15} h={12} c={g}><path d="M1 4h2l3-3v10L3 8H1zM9 4l5 4M14 4L9 8" /></Icon>
      <Icon w={15} h={15} c={w} sw={3.500}><path d="M2 0l10 15" /><path d="M14 0L1 15" strokeWidth="1.800" /></Icon>
      <Icon w={17} h={17} c="none"><circle cx="8.500" cy="8.500" r="8.500" fill={g} /><path d="M3 4l10 3-4 2v5z" fill={w} /></Icon>
      <Icon w={17} h={14} c="none" fill={g}><circle cx="6" cy="6" r="5" /><ellipse cx="12" cy="8" rx="5" ry="4" /><path d="M0 7q6-2 9 4H3z" fill="#8a7d88" /></Icon>
      <NoteIcon w={17} />
      <Icon w={13} h={15} c="none" fill={w}><path d="M0 0h5.500v6H0zM7 0h5.500v6H7zM0 7h5.500v8L3 12.500 0 14zM7 7h5.500v7L10 12.500 7 15z" /></Icon>
      <Obs r={8.500} />
      <Icon w={16} h={15} c={C.plum} sw={4}><circle cx="10" cy="6" r="4" /><path d="M6 10l-5 4" /></Icon>
      <Icon w={15} h={15} c={g}><path d="M10 11H4V4h10v6M3 9H.7V.700H12V3" /></Icon>
      <Icon w={12} h={17} c={g}><rect x="3" y="0" width="6.500" height="11" rx="3" fill={w} /><path d="M.6 7c0 8 11 8 11 0M6 13v3M3 16.500h6" /></Icon>
      <Icon w={14} h={15} c="none"><rect width="14" height="15" fill={g} /><path d="M9 0h5v15H9z" fill={w} /></Icon>
      <Icon w={16} h={16} c="none"><rect width="16" height="16" rx="2" fill="#93929b" /><path d="M4 4h8v7H8L4 13z" fill={w} /></Icon>
      <Icon w={13} h={17} c={w}><rect width="13" height="17" rx="6" fill="#9a9aa2" stroke="none" /><path d="M4 5l5 6-2.500 3V3L9 6l-5 5" /></Icon>
      <Icon w={15} h={14} c="none"><rect width="15" height="14" fill="#4a3745" /><path d="M9 3l4 1v4z" fill={g} /></Icon>
      <Icon w={17} h={16} c="none"><circle cx="8.500" cy="8" r="8" fill={g} /><path d="M6 6l5 1 4 7-7-1z" fill={C.ink} /></Icon>
      <Photo s={16} />
      <Icon w={15} h={14} c={g}><path d="M.6.600h13.800v12.800H.6z" fill={C.plum} /><path d="M3 7h9" strokeDasharray="1 1" /></Icon>
      <Icon w={16} h={16} c={w} sw={2}><circle cx="8" cy="8" r="8" fill="#9a9aa2" stroke="none" /><path d="M6 4v7.500h5" /></Icon>
    </Tray>
  );
}

function SideBar() {
  return (
    <Taskbar>
      <TaskItem $h={40}><Icon w={18} h={17} c="none" fill={C.paper}><path d="M0 2.500l7.500-1V8H0zM8.500 1.400L18 0v8H8.500zM0 9h7.500v6.500L0 14.500zM8.500 9H18v8l-9.500-1.400z" /></Icon></TaskItem>
      <TaskItem $h={40}><Icon w={17} h={16} c={C.grey}><circle cx="11" cy="6" r="5" /><path d="M7.500 9.500L0 16" /></Icon></TaskItem>
      <TaskItem $h={40}><Icon w={16} h={16} c={C.paper} sw={2}><circle cx="8" cy="8" r="6.800" /></Icon></TaskItem>
      <TaskItem $h={38}><Icon w={17} h={15} c={C.grey}><path d="M1 0v3h10V0M1 15v-3h10v3M1.500 5h9v5h-9zM15 0v15" /><rect x="14" y="4" width="2.500" height="3" fill={C.paper} stroke="none" /></Icon></TaskItem>
      <TaskItem $h={56}><Icon w={22} h={18} c="none"><path d="M0 0h8l1 1.500h13V18H0z" fill={C.grey} /><path d="M5 18v-7h12v7" stroke={C.plum} strokeDasharray="1 1" fill="none" /></Icon></TaskItem>
      <TaskItem $h={39}><Icon w={24} h={23} c="none"><path d="M2 5c4-3 7 3 10 0l3-5c6 3 9 8 9 12A12 11 0 0 1 0 12z" fill={C.plum} /><path d="M13 1c6-1 11 8 8 14-4 0-8-8-8-14zM4 6l7 1 3 5-6-2z" fill={C.grey} /></Icon></TaskItem>
      <TaskItem $h={52} $mb={3}><Icon w={24} h={18} c={C.grey} sw={5}><path d="M2 9l7 6L22 2" /></Icon></TaskItem>
      <TaskItem $h={38} $mb={9} $run><NoteIcon w={25} /></TaskItem>
      <TaskItem $h={38} $mb={5} $run><Photo s={24} /></TaskItem>
      <TaskItem $h={46} $mb={5} $run $on><VmIcon w={24} /></TaskItem>
      <TaskItem $h={38} $mb={9} $run><Obs r={11.500} /></TaskItem>
      <TaskItem $h={38} $run><Snail w={24} /></TaskItem>
      <PowerRow>
        <Icon w={12} h={21} c="none" fill={C.paper}><path d="M2 0h2v5h4V0h2v5h2v4c0 3-2 5-4.500 5v7h-3v-7C2 14 0 12 0 9V5h2z" /></Icon>
        <BatteryBox><Label w={27} s={12.500} b={600}>97%</Label></BatteryBox>
        <Icon w={3} h={10} c="none" fill={C.paper}><rect width="2" height="10" /></Icon>
      </PowerRow>
      <TrayIcons />
      <TimeStack $mt={11}>
        <Label w={26} s={12.500}>ENG</Label>
      </TimeStack>
      <TimeStack $mt={26}>
        <Label w={31} s={12.500} c="#cfd3d5">17:25</Label>
        <Label w={36} s={12} c="#e2e5e6">星期二</Label>
        <Label w={60} s={12.500} c="#e2e5e6">2021/11/9</Label>
      </TimeStack>
      <Notice>
        <Icon w={17} h={16} c="none" fill={C.paper}><path d="M0 0h17v13H6l-4 3v-3H0z" /><path d="M3 3.500h11M3 6.500h11M3 9.500h6" stroke={C.plum} /></Icon>
        <Badge>2</Badge>
      </Notice>
      <BottomEdge />
    </Taskbar>
  );
}

/* ---------- floating widget and watermark ---------- */
const Speed = styled.div`position: absolute; left: 1607px; top: 940px; width: 110px; height: 55px; display: flex; align-items: center;`;
const SpeedPill = styled.div`display: flex; flex-direction: column; justify-content: center; gap: 5px; width: 80px; height: 41px; padding-left: 12px; border-radius: 20px 0 0 20px; background: ${C.paper}; color: #8d9299;`;
const SpeedDial = styled.div`display: flex; align-items: baseline; justify-content: center; flex: none; width: 54px; height: 54px; margin-left: -24px; padding: 14px 2px 0 0; border-radius: 50%; background: ${C.paper}; box-shadow: inset 0 0 0 2px ${C.paper}, inset 3px 0 0 2px ${C.grey}; color: ${C.ink};`;
const Watermark = styled.div`position: absolute; left: 1597px; top: 978px; display: flex; align-items: flex-start; font-family: "Open Sans", sans-serif;`;
const WatermarkName = styled.div`padding-top: 21px; font-family: "Noto Sans CJK SC", sans-serif;`;

function WatermarkLogo() {
  const half = (x) => (
    <g transform={`translate(${x} 0)`}>
      <path d="M0 5L11 2l2 39c14-1 24 2 27 9-3 8-17 13-32 14zM17 46l1 11 11-6z" fill={C.grey} fillRule="evenodd" />
      <g stroke={C.grey} strokeWidth="6.500">
        <path d="M42 35l4 25M50 9l5 49M64 32l1.500 28M38 22l1 8M44 21l1 8M61 22l1 8M68 22l0 8" />
      </g>
      <path d="M41.300 21l1.200 9M64.800 21l.5 10" stroke={C.ink} strokeWidth="1.500" />
    </g>
  );
  return <Icon w={142} h={64} ml={18} c="none">{half(0)}{half(70)}</Icon>;
}

export default function App() {
  return (
    <Screen>
      <Global />
      <TopMenu />
      <OneNoteWindow />
      <Backdrop />
      <Vmware />
      <Popup>
        <Label w={27} ml={2} s={12} c={C.grey}>Poi...</Label>
        <PopupButton><Label w={24} s={12} b={600}>开始</Label></PopupButton>
      </Popup>
      <DockBar />
      <TaskbarBack />
      <Speed>
        <SpeedPill><Label w={40} s={9}>↑ 463 K/s</Label><Label w={38} s={9}>{"↓ 31  K/s"}</Label></SpeedPill>
        <SpeedDial><Label w={25} s={24}>60</Label><Label w={8} s={9}>%</Label></SpeedDial>
      </Speed>
      <Watermark>
        <WatermarkName><Label w={131} s={39} c={C.grey}>erlinux</Label></WatermarkName>
        <WatermarkLogo />
      </Watermark>
      <SideBar />
      <Pointer $x={882} $y={1034} width="25" height="34" viewBox="0 0 25 34" fill={C.paper} stroke={C.ink} strokeWidth="2"><path d="M1 1v29l6-5 5 9 5-3-5-9h11z" /></Pointer>
    </Screen>
  );
}
